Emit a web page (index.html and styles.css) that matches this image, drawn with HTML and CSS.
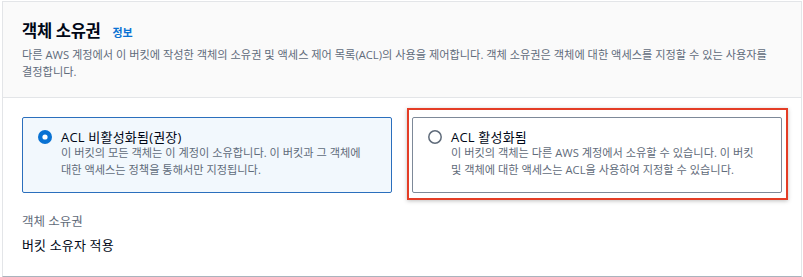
FILE: index.html
```html
<!DOCTYPE html>
<html>
<head>
    <title>객체 소유권</title>
    <link rel="stylesheet" href="styles.css">
</head>
<body>
<div class="panel">
    <div class="panel-header">
        <div class="title-row">
            <h2 class="title">객체 소유권</h2>
            <a class="info" href="#">정보</a>
        </div>
        <p class="desc">다른 AWS 계정에서 이 버킷에 작성한 객체의 소유권 및 액세스 제어 목록(ACL)의 사용을 제어합니다. 객체 소유권은 객체에 대한 액세스를 지정할 수 있는 사용자를 결정합니다.</p>
    </div>

    <div class="panel-body">
        <div class="tiles">
            <div class="tile selected">
                <svg class="radio" width="14" height="14" viewBox="0 0 14 14">
                    <circle cx="7" cy="7" r="7" fill="#0972d3"/>
                    <circle cx="7" cy="7" r="2.6" fill="#fff"/>
                </svg>
                <div class="tile-text">
                    <div class="tile-title">ACL 비활성화됨(권장)</div>
                    <div class="tile-desc">이 버킷의 모든 객체는 이 계정이 소유합니다. 이 버킷과 그 객체에 대한 액세스는 정책을 통해서만 지정됩니다.</div>
                </div>
            </div>
            <div class="tile marked">
                <svg class="radio" width="14" height="14" viewBox="0 0 14 14">
                    <circle cx="7" cy="7" r="6.2" fill="#fff" stroke="#5f6b7a" stroke-width="1.5"/>
                </svg>
                <div class="tile-text">
                    <div class="tile-title">ACL 활성화됨</div>
                    <div class="tile-desc">이 버킷의 객체는 다른 AWS 계정에서 소유할 수 있습니다. 이 버킷 및 객체에 대한 액세스는 ACL을 사용하여 지정할 수 있습니다.</div>
                </div>
                <div class="highlight"></div>
            </div>
        </div>

        <div class="field-label">객체 소유권</div>
        <div class="field-value">버킷 소유자 적용</div>
    </div>
</div>
</body>
</html>
```

FILE: styles.css
```css
* {
    padding: 0;
    margin: 0;
    box-sizing: border-box;
}

body {
    background-color: #ffffff;
    font-family: "Open Sans", "Noto Sans CJK KR", sans-serif;
    color: #000716;
    word-break: keep-all;
}

.panel {
    margin: 1px 1px 0 2px;
    border: 1px solid #e3e5e8;
    border-bottom-color: #aab3bd;
    background-color: #ffffff;
}

.panel-header {
    background-color: #fafafa;
    padding: 18px 19px 17px;
    border-bottom: 1px solid #e3e5e8;
}

.title-row {
    display: flex;
    align-items: baseline;
    gap: 12px;
}

.title {
    font-size: 16.5px;
    line-height: 22px;
    font-weight: 700;
    letter-spacing: -0.3px;
}

.info {
    font-size: 11px;
    font-weight: 700;
    color: #0972d3; /* link blue */
    text-decoration: none;
}

.desc {
    margin-top: 4px;
    font-size: 11.2px;
    line-height: 17px;
    color: #5f6b7a;
}

.panel-body {
    padding: 19px 19px 21px;
}

.tiles {
    display: grid;
    grid-template-columns: repeat(2, 1fr);
    gap: 20px;
}

.tile {
    position: relative;
    display: flex;
    align-items: flex-start;
    gap: 9px;
    height: 76px;
    padding: 12px 15px 0 15px;
    border: 1px solid #7d8998;
    border-radius: 2px;
    background-color: #ffffff;
}

.tile.selected {
    border-color: #2b6fbd;
    background-color: #f2f8fd;
}

.radio {
    flex: none;
}

.tile-title {
    font-size: 13px;
    line-height: 14px;
    letter-spacing: 0.2px;
}

.tile-desc {
    font-size: 11.2px;
    line-height: 17px;
    color: #5f6b7a;
}

/* red annotation frame around the second option */
.highlight {
    position: absolute;
    top: -10px;
    left: -6px;
    right: -7px;
    bottom: -8px;
    border: 2px solid #e43d26;
    box-shadow: 0 1px 4px rgba(0, 0, 0, 0.25);
    pointer-events: none;
}

.field-label {
    margin-top: 20px;
    font-size: 12.5px;
    line-height: 18px;
    color: #5f6b7a;
}

.field-value {
    margin-top: 4px;
    font-size: 13px;
    line-height: 20px;
    letter-spacing: 0.15px;
}
```
